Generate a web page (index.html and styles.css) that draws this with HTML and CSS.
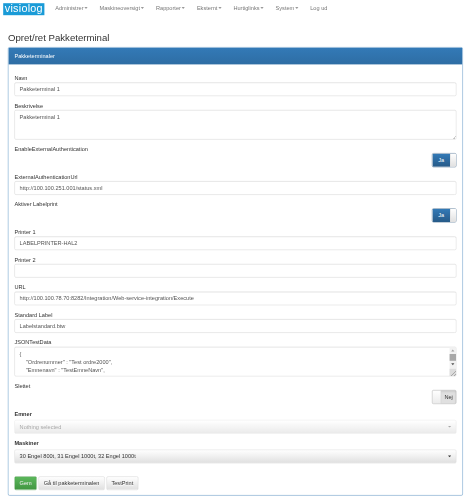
FILE: index.html
```html
<!DOCTYPE html>
<html lang="da">
<head>
<meta charset="utf-8">
<title>Opret/ret Pakketerminal</title>
<link rel="stylesheet" href="styles.css">
</head>
<body>
<div class="frame">
<div class="page">
  <nav class="navbar">
    <a class="logo">visiolog</a>
    <ul class="nav">
      <li>Administrer<i class="caret"></i></li>
      <li>Maskineoversigt<i class="caret"></i></li>
      <li>Rapporter<i class="caret"></i></li>
      <li>Eksternt<i class="caret"></i></li>
      <li>Hurtiglinks<i class="caret"></i></li>
      <li>System<i class="caret"></i></li>
      <li>Log ud</li>
    </ul>
  </nav>
  <main class="container">
    <h3 class="title">Opret/ret Pakketerminal</h3>
    <section class="panel">
      <div class="panel-heading">Pakketerminaler</div>
      <form class="panel-body">
        <div class="group"><label>Navn</label><input class="control" value="Pakketerminal 1"></div>
        <div class="group"><label>Beskrivelse</label><textarea class="control area">Pakketerminal 1</textarea></div>
        <div class="group">
          <label>EnableExternalAuthentication</label>
          <div class="toggle-row"><div class="toggle on"><span class="toggle-label">Ja</span><span class="handle"></span></div></div>
        </div>
        <div class="group"><label>ExternalAuthenticationUrl</label><input class="control" value="http://100.100.251.001/status.xml"></div>
        <div class="group">
          <label>Aktiver Labelprint</label>
          <div class="toggle-row"><div class="toggle on"><span class="toggle-label">Ja</span><span class="handle"></span></div></div>
        </div>
        <div class="group"><label>Printer 1</label><input class="control" value="LABELPRINTER-HAL2"></div>
        <div class="group"><label>Printer 2</label><input class="control" value=""></div>
        <div class="group"><label>URL</label><input class="control" value="http://100.100.78.70:8282/Integration/Web-service-integration/Execute"></div>
        <div class="group"><label>Standard Label</label><input class="control" value="Labelstandard.btw"></div>
        <div class="group">
          <label>JSONTestData</label>
          <div class="json-wrap">
            <textarea class="control json">{
    "Ordrenummer" : "Test ordre2000",
    "Emnenavn" : "TestEmneNavn",
    "Emnenummer" : "TestEmneNummer",
}</textarea>
            <div class="scrollbar">
              <span class="sb-btn"><i class="arrow up"></i></span>
              <span class="sb-thumb"></span>
              <span class="sb-btn"><i class="arrow down"></i></span>
              <span class="sb-grip"></span>
            </div>
          </div>
        </div>
        <div class="group">
          <label>Slettet</label>
          <div class="toggle-row"><div class="toggle off"><span class="handle"></span><span class="toggle-label">Nej</span></div></div>
        </div>
        <div class="group picker">
          <label>Emner</label>
          <div class="select disabled"><span>Nothing selected</span><i class="caret"></i></div>
        </div>
        <div class="group picker">
          <label>Maskiner</label>
          <div class="select"><span>30 Engel 800t, 31 Engel 1000t, 32 Engel 1000t</span><i class="caret"></i></div>
        </div>
        <div class="actions">
          <button type="button" class="btn success">Gem</button>
          <button type="button" class="btn">Gå til pakketerminalen</button>
          <button type="button" class="btn">TestPrint</button>
        </div>
      </form>
    </section>
  </main>
</div>
</div>
</body>
</html>
```
FILE: styles.css
```css
html, body { margin: 0; padding: 0; background: #fff; }
* { box-sizing: border-box; }

.frame { width: 468px; height: 500px; overflow: hidden; }

/* The reference is a 1170px wide Bootstrap page reduced to 40% */
.page {
  width: 1170px;
  height: 1250px;
  transform: scale(0.4);
  transform-origin: 0 0;
  font-family: "Liberation Sans", Arial, sans-serif;
  font-size: 14px;
  line-height: 20px;
  color: #333;
  filter: blur(0.9px);
}

.navbar { display: flex; height: 50px; padding-left: 8px; }
.logo {
  width: 103px;
  height: 30px;
  margin-top: 8px;
  background: #1a9bd7;
  color: #fff;
  font-size: 27px;
  line-height: 28px;
  text-align: center;
  letter-spacing: 0.6px;
}
.nav { display: flex; list-style: none; margin: 0 0 0 12px; padding: 0; }
.nav li { padding: 9px 15px 0; color: #777; white-space: nowrap; }
.caret {
  display: inline-block;
  width: 0;
  height: 0;
  margin-left: 2px;
  vertical-align: middle;
  border-top: 4px solid;
  border-left: 4px solid transparent;
  border-right: 4px solid transparent;
}

.container { padding: 0 13px 0 20px; }
.title { margin: 28px 0 0; height: 40px; font-size: 24px; font-weight: 500; line-height: 34px; color: #333; }

.panel {
  border: 1px solid #337ab7;
  border-radius: 4px;
  box-shadow: 0 1px 1px rgba(0, 0, 0, 0.05);
  overflow: hidden;
}
.panel-heading {
  height: 42px;
  padding: 10px 15px;
  color: #fff;
  background: linear-gradient(to bottom, #337ab7, #2e6da4);
}
.panel-body { padding: 24px 15px 13px; }

.group { margin-bottom: 14px; }
.group > label { display: block; height: 20px; margin-bottom: 1px; color: #333; }
.control {
  display: block;
  width: 100%;
  height: 34px;
  padding: 6px 12px;
  border: 1px solid #ccc;
  border-radius: 4px;
  background: #fff;
  color: #555;
  font: 14px/20px "Liberation Sans", Arial, sans-serif;
  box-shadow: inset 0 1px 1px rgba(0, 0, 0, 0.075);
}
.area { height: 74px; resize: vertical; }

.toggle-row { display: flex; justify-content: flex-end; margin-top: -1px; }
.toggle {
  display: flex;
  width: 61px;
  height: 35px;
  border: 1px solid #adadad;
  border-radius: 4px;
  overflow: hidden;
  font-size: 14px;
  line-height: 33px;
  text-align: center;
}
.toggle.on { border-color: #204d74; }
.toggle.on .toggle-label { flex: 1; background: linear-gradient(to bottom, #337ab7, #265a88); color: #fff; }
.toggle.on .handle { width: 15px; background: linear-gradient(to bottom, #fff, #e0e0e0); border-left: 1px solid #ccc; }
.toggle.off { background: #e0e0e0; box-shadow: inset 0 3px 5px rgba(0, 0, 0, 0.125); }
.toggle.off .toggle-label { flex: 1; color: #333; }
.toggle.off .handle { width: 22px; background: linear-gradient(to bottom, #fff, #ebebeb); border-right: 1px solid #ccc; }

.json-wrap { position: relative; height: 74px; }
.json { height: 74px; resize: none; overflow: hidden; white-space: pre; }
.scrollbar {
  position: absolute;
  top: 1px;
  right: 1px;
  bottom: 1px;
  width: 16px;
  display: flex;
  flex-direction: column;
  background: #f1f1f1;
}
.sb-btn { display: flex; align-items: center; justify-content: center; height: 17px; }
.sb-thumb { height: 17px; background: #a8a8a8; flex: none; }
.sb-grip {
  flex: 1;
  margin-top: 3px;
  background: linear-gradient(135deg, #dcdcdc 60%, #a8a8a8 60%, #a8a8a8 68%, #dcdcdc 68%, #dcdcdc 78%, #a8a8a8 78%, #a8a8a8 86%, #dcdcdc 86%);
}
.arrow { width: 0; height: 0; border-left: 4px solid transparent; border-right: 4px solid transparent; }
.arrow.up { border-bottom: 5px solid #a3a3a3; }
.arrow.down { border-top: 5px solid #505050; }

.picker > label { margin-bottom: 6px; font-weight: 700; }
.select {
  display: flex;
  align-items: center;
  justify-content: space-between;
  height: 34px;
  padding: 0 12px;
  border: 1px solid #d4d4d4;
  border-radius: 4px;
  background: linear-gradient(to bottom, #fff, #e0e0e0);
  box-shadow: 0 1px 1px rgba(0, 0, 0, 0.05);
  color: #333;
}
.select .caret { margin: 0 0 0 2px; }
.select.disabled { opacity: 0.65; color: #777; }

.actions { display: flex; gap: 4px; margin-top: 33px; }
.btn {
  height: 34px;
  padding: 6px 12px;
  border: 1px solid #ccc;
  border-radius: 4px;
  background: linear-gradient(to bottom, #fff, #e0e0e0);
  color: #333;
  font: 14px/20px "Liberation Sans", Arial, sans-serif;
  text-shadow: 0 1px 0 #fff;
}
.btn.success {
  border-color: #3e8f3e;
  background: linear-gradient(to bottom, #5cb85c, #419641);
  color: #fff;
  text-shadow: 0 -1px 0 rgba(0, 0, 0, 0.2);
}
```
